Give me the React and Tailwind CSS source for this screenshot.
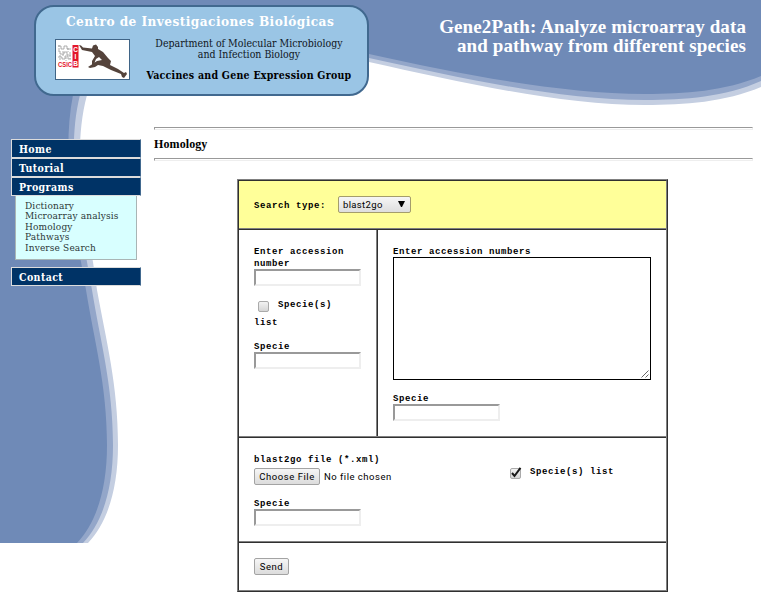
import React from "react";

function Backdrop() {
  return (
    <svg className="absolute inset-0" width="761" height="597" viewBox="0 0 761 597" aria-hidden="true">
      <path
        fill="#c4cee1"
        d="M0 0H761V87C725 102 685 105 645 105C560 105 460 82 369 62C250 30 110 15 87 95C72 150 84 220 93 262L97 290C106 340 118 385 118 445C118 490 107 523 88 543H0Z"
      />
      <path
        fill="#93a6c9"
        d="M0 0H761V81C725 97 685 100 645 100C560 100 460 78 369 58C250 26 103 10 80 95C66 150 79 220 87 262L92 290C100 340 113 385 113 445C113 490 102 523 83 543H0Z"
      />
      <path
        fill="#6f8ab7"
        d="M0 0H761V76C725 91 685 94 645 94C560 94 460 74 369 54C250 22 96 5 73 95C62 150 73 220 81 262L86 290C94 340 107 385 107 445C107 490 96 523 77 543H0Z"
      />
    </svg>
  );
}

function Logo() {
  return (
    <svg width="75" height="41" viewBox="0 0 75 41" className="block shrink-0">
      <rect x="0.5" y="0.5" width="74" height="40" fill="#fff" stroke="#3f6486" />
      <g stroke="#9a9a9a" strokeWidth="0.8" fill="none">
        <path d="M3 7h3v3h3v-3h3v3h4M3 12h2v3h4v-2h3v3h4M3 18h4v2h3v-3h3v3h3" />
        <path d="M4 6v5M8 12v5M13 9v4M15 13v7M5 16v5M11 18v4" strokeDasharray="2 1" />
      </g>
      <text x="3" y="28" fontSize="6.6" fontWeight="700" fill="#e3162b" fontFamily="Liberation Sans, sans-serif" textLength="14" lengthAdjust="spacingAndGlyphs">CSIC</text>
      <rect x="17.5" y="6" width="6" height="22.5" fill="#e3162b" />
      <g fill="#fff" fontSize="6.5" fontWeight="700" fontFamily="Liberation Sans, sans-serif" textAnchor="middle">
        <text x="20.5" y="13">C</text>
        <text x="20.5" y="20">I</text>
        <text x="20.5" y="27">B</text>
      </g>
      <path
        fill="#54433b"
        d="M24 6L26 6.5L28 8.5L37 9.5L38 6.5L41 5.5L43 8L43 10L48 13L53 19L56 22L55 26L63 30L69 34L71 33L72 35L69 39L67 38L66 35L56 31L48 27L43 26L40 28L35 29L33 28L36 26L42 22L47 21L44 18L41 20L39 25L37 27L37 22L40 17L37 13L27 11Z"
      />
    </svg>
  );
}

function HeaderCard() {
  return (
    <div className="mt-[5px] ml-[34px] h-[91px] w-[335px] rounded-[20px] border-2 border-[#41698f] bg-[#9ac5e5] font-['DejaVu_Serif_Condensed','DejaVu_Serif',serif]">
      <h1 className="mt-[5px] ml-[30px] text-[13.5px] leading-[18px] font-bold tracking-[0.44px] whitespace-nowrap text-white">
        Centro de Investigaciones Biológicas
      </h1>
      <div className="flex">
        <div className="mt-[9px] ml-[19px]">
          <Logo />
        </div>
        <div className="mt-[8px] ml-[12px] w-[214px] text-center text-[10.5px] leading-[11px] whitespace-nowrap text-[#10161d]">
          <p>Department of Molecular Microbiology</p>
          <p>and Infection Biology</p>
          <p className="mt-[10px] text-[10.5px] font-bold tracking-[0.26px] text-black">Vaccines and Gene Expression Group</p>
        </div>
      </div>
    </div>
  );
}

function MenuButton({ children }) {
  return (
    <a className="block h-[19px] border border-r-[#41698f] border-[#dcdcdc] bg-[#003366] pl-[7px] font-['DejaVu_Serif_Condensed','DejaVu_Serif',serif] text-[10.5px] leading-[18px] font-bold tracking-[0.4px] whitespace-nowrap text-white">
      {children}
    </a>
  );
}

function Sidebar() {
  return (
    <nav className="mt-[43px] ml-[11px] w-[130px] shrink-0">
      <MenuButton>Home</MenuButton>
      <MenuButton>Tutorial</MenuButton>
      <MenuButton>Programs</MenuButton>
      <ul className="ml-[4px] h-[64px] w-[122px] border border-t-0 border-[#a9b5b5] bg-[#d8ffff] pt-[4.5px] pl-[9px] font-['DejaVu_Serif',serif] text-[9px] leading-[10.5px] tracking-[0.15px] whitespace-nowrap text-[#2c3838]">
        <li>Dictionary</li>
        <li>Microarray analysis</li>
        <li>Homology</li>
        <li>Pathways</li>
        <li>Inverse Search</li>
      </ul>
      <div className="mt-[7px]">
        <MenuButton>Contact</MenuButton>
      </div>
    </nav>
  );
}

function Rule() {
  return <div className="h-[3px] w-[599px] border border-t-[#999] border-r-[#eee] border-b-[#eee] border-l-[#999]" />;
}

function Label({ children, className = "" }) {
  return (
    <span className={"block h-[12px] font-['Liberation_Mono',monospace] text-[9px] leading-[14px] font-bold tracking-[0.6px] whitespace-nowrap text-black " + className}>
      {children}
    </span>
  );
}

function Field() {
  return (
    <input
      type="text"
      className="block h-[17px] w-[107px] border-2 border-t-[#999] border-r-[#eee] border-b-[#eee] border-l-[#999] bg-white outline-none"
    />
  );
}

function Check({ checked }) {
  return (
    <svg width="13" height="13" viewBox="0 0 13 13" className="block shrink-0 overflow-visible">
      <defs>
        <linearGradient id="box" x1="0" y1="0" x2="0" y2="1">
          <stop offset="0" stopColor="#f4f4f4" />
          <stop offset="1" stopColor="#d4d4d4" />
        </linearGradient>
      </defs>
      <rect x="1.5" y="1.5" width="10" height="10" rx="1.5" fill="url(#box)" stroke="#aaa" />
      {checked && <path d="M3 6L5.5 9L11.5 0.8" fill="none" stroke="#181818" strokeWidth="2" />}
    </svg>
  );
}

function PushButton({ children, className }) {
  return (
    <button
      className={
        "block h-[17px] rounded-[2px] border border-[#a3a3a3] bg-linear-to-b from-[#f6f6f6] to-[#dcdcdc] text-center font-[Roboto,sans-serif] text-[9.5px] leading-[15px] font-normal tracking-[0.55px] whitespace-nowrap text-black " +
        className
      }
    >
      {children}
    </button>
  );
}

function SearchForm() {
  return (
    <div className="mt-[18px] ml-[83px] h-[413px] w-[431px] border border-t-[#808080] border-r-[#303030] border-b-[#303030] border-l-[#808080]">
      <div className="h-[411px] border border-t-[#303030] border-r-[#808080] border-b-[#808080] border-l-[#303030] bg-white">
        <section className="flex h-[48px] border-b border-[#808080] bg-[#ffff99] pl-[15px]">
          <Label className="mt-[18px] w-[84px]">Search type:</Label>
          <div className="mt-[15px] flex h-[17px] w-[73px] items-center justify-between rounded-[2px] border border-[#a49d6c] bg-linear-to-b from-[#f6f6f6] to-[#dedede] pr-[5px] pl-[4px] font-[Roboto,sans-serif] text-[9.5px] leading-[15px] font-normal tracking-[0.35px]">
            <span>blast2go</span>
            <svg width="7" height="6" viewBox="0 0 7 6" className="mb-px">
              <path d="M0 0H7L4 6H3Z" fill="#000" />
            </svg>
          </div>
        </section>

        <section className="flex h-[207px] border-t border-[#303030]">
          <div className="w-[138px] border-r border-[#808080] pt-[15px] pl-[15px]">
            <Label>Enter accession</Label>
            <Label>number</Label>
            <Field />
            <div className="mt-[14px] flex">
              <div className="ml-[3px]">
                <Check />
              </div>
              <Label className="-mt-[2px] ml-[8px]">Specie(s)</Label>
            </div>
            <Label className="mt-[3px]">list</Label>
            <Label className="mt-[12px]">Specie</Label>
            <Field />
          </div>
          <div className="grow border-l border-[#303030] pt-[15px] pl-[15px]">
            <Label>Enter accession numbers</Label>
            <div className="flex h-[123px] w-[258px] items-end justify-end border border-black bg-white">
              <svg width="9" height="9" viewBox="0 0 9 9">
                <path d="M0.5 7.5L7.5 0.5M4.5 7.5L7.5 4.5" stroke="#555" fill="none" strokeWidth="0.9" />
              </svg>
            </div>
            <Label className="mt-[12px]">Specie</Label>
            <Field />
          </div>
        </section>

        <section className="flex h-[106px] border-t border-b border-t-[#808080] border-b-[#808080]">
          <div className="w-full border-t border-[#303030] pt-[15px] pl-[15px]">
            <div className="flex">
              <div className="w-[256px]">
                <Label>blast2go file (*.xml)</Label>
                <div className="mt-[3px] flex items-center">
                  <PushButton className="w-[66px]">Choose File</PushButton>
                  <span className="ml-[4px] font-[Roboto,sans-serif] text-[9.5px] leading-[17px] tracking-[0.5px] whitespace-nowrap text-black">
                    No file chosen
                  </span>
                </div>
                <Label className="mt-[12px]">Specie</Label>
                <Field />
              </div>
              <div className="mt-[14px] -ml-px">
                <Check checked />
              </div>
              <Label className="mt-[12px] ml-[8px]">Specie(s) list</Label>
            </div>
          </div>
        </section>

        <section className="border-t border-[#303030] pt-[15px] pl-[15px]">
          <PushButton className="w-[35px]">Send</PushButton>
        </section>
      </div>
    </div>
  );
}

export default function App() {
  return (
    <div className="relative h-[597px] w-[761px] overflow-hidden bg-white font-['Liberation_Serif',serif]">
      <Backdrop />
      <div className="relative">
        <header className="flex h-[96px] justify-between">
          <HeaderCard />
          <h2 className="mt-[17px] mr-[15px] text-right text-[19px] leading-[19px] font-bold tracking-[0.11px] whitespace-nowrap text-white">
            Gene2Path: Analyze microarray data
            <br />
            and pathway from different species
          </h2>
        </header>
        <div className="flex">
          <Sidebar />
          <main className="mt-[31px] ml-[13px]">
            <Rule />
            <h3 className="mt-[6px] mb-[6px] text-[12px] leading-[16px] font-bold tracking-[0.1px] text-black">Homology</h3>
            <Rule />
            <SearchForm />
          </main>
        </div>
      </div>
    </div>
  );
}
